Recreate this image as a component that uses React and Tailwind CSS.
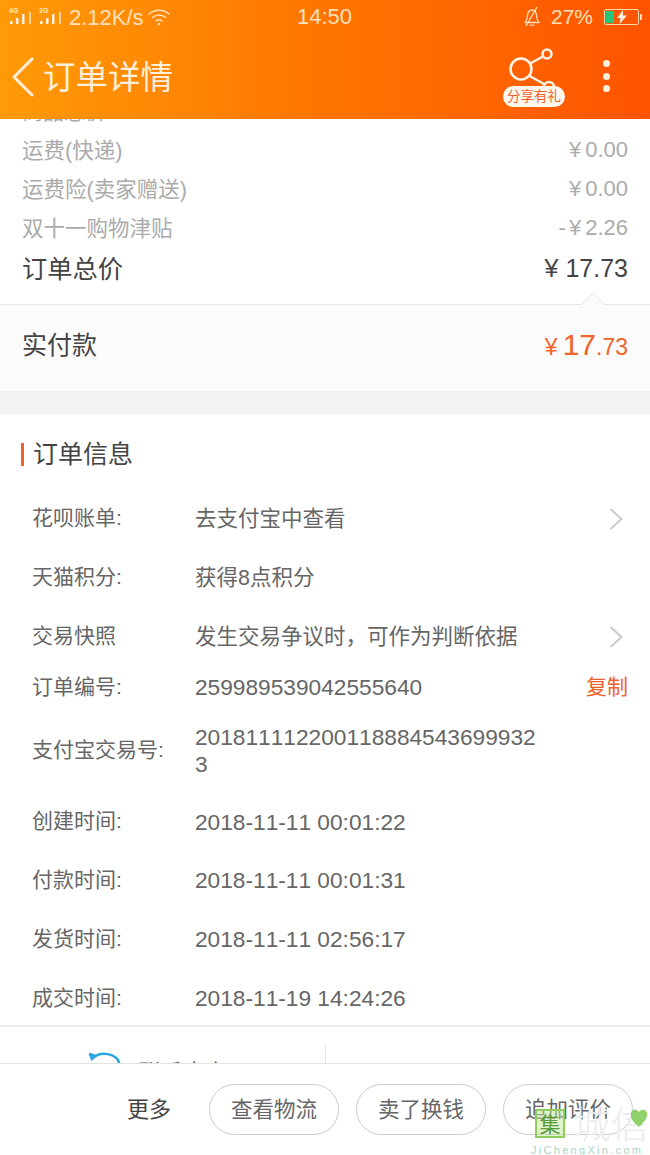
import React from 'react'

const cjk = "font-['Liberation_Sans','Noto_Sans_CJK_SC',sans-serif]"

const fees = [
  { label: '运费(快递)', sign: '', num: '0.00' },
  { label: '运费险(卖家赠送)', sign: '', num: '0.00' },
  { label: '双十一购物津贴', sign: '-', num: '2.26' },
]

const infoRows = [
  { label: '花呗账单:', value: '去支付宝中查看', h: 'h-[59px]', arrow: true },
  { label: '天猫积分:', value: '获得8点积分', h: 'h-[59px]' },
  { label: '交易快照', value: '发生交易争议时，可作为判断依据', h: 'h-[59px]', arrow: true },
  { label: '订单编号:', value: '259989539042555640', h: 'h-[43px]', copy: true, digits: true },
  { label: '支付宝交易号:', value: '201811112200118884543699932\n3', h: 'h-[84px]', digits: true },
  { label: '创建时间:', value: '2018-11-11 00:01:22', h: 'h-[58px]', digits: true },
  { label: '付款时间:', value: '2018-11-11 00:01:31', h: 'h-[59px]', digits: true },
  { label: '发货时间:', value: '2018-11-11 02:56:17', h: 'h-[59px]', digits: true },
  { label: '成交时间:', value: '2018-11-19 14:24:26', h: 'h-[59px]', digits: true },
]

function Signal({ tag }) {
  return (
    <span className="relative w-[23px] h-[18px] inline-block">
      <span className="absolute left-0 -top-[1px] text-[7px] leading-[8px] font-bold text-[#ffe9cc]">{tag}</span>
      <svg className="absolute left-0 top-0" width="23" height="18" viewBox="0 0 23 18" fill="#fff0dc">
        <rect x="1" y="13" width="2.500" height="3" />
        <rect x="7" y="10" width="2.500" height="6" />
        <rect x="13" y="6" width="2.500" height="10" />
        <rect x="20" y="4" width="2" height="12" opacity="0.7" />
      </svg>
    </span>
  )
}

function StatusBar() {
  return (
    <div className="h-[34px] relative flex items-center justify-between pl-[9px] pr-[11px] text-[22px] text-[#ffe0bd]">
      <div className="flex items-center">
        <div className="flex items-center gap-[7px]">
          <Signal tag="4G" />
          <Signal tag="2G" />
        </div>
        <span className="ml-[7px]">2.12K/s</span>
        <svg className="ml-[3px]" width="24" height="20" viewBox="0 0 24 20" fill="none" stroke="#ffe0bd" strokeWidth="1.6" strokeLinecap="round">
          <path d="M2 7c5.500-5 14.500-5 20 0" />
          <path d="M5.500 10.500c3.700-3.300 9.300-3.300 13 0" />
          <path d="M9 14c1.800-1.500 4.200-1.500 6 0" />
          <circle cx="12" cy="17" r="1.200" fill="#ffe0bd" stroke="none" />
        </svg>
      </div>
      <span className="absolute left-[297px] top-0 leading-[34px]">14:50</span>
      <div className="flex items-center">
        <svg width="20" height="22" viewBox="0 0 20 22" fill="none" stroke="#ffe0bd" strokeWidth="1.3" strokeLinejoin="round">
          <path d="M3 16.500c1.500-1.500 2-3 2.300-6C5.600 6.500 7.500 4 10 4s4.400 2.500 4.700 6.500c.3 3 .8 4.500 2.300 6z" />
          <path d="M8 18.500c.5 1.300 3.500 1.300 4 0" />
          <path d="M15 1 4 20" />
        </svg>
        <span className="ml-[9px] text-[21px]">27%</span>
        <span className="ml-[11px] relative w-[35px] h-[16px] border border-[#ffd9ac] rounded-[2px] flex items-center">
          <span className="w-[8px] h-[12px] ml-[1px] bg-[#27c77b]" />
          <svg className="ml-[3px]" width="10" height="14" viewBox="0 0 10 14" fill="#fff2df">
            <path d="M6 0 0 8h3.500L2.500 14 10 5.500H6z" />
          </svg>
          <span className="absolute -right-[4px] top-[4px] w-[2px] h-[6px] bg-[#ffd9ac]" />
        </span>
      </div>
    </div>
  )
}

function Header() {
  return (
    <header className="h-[119px] shrink-0 relative z-10 bg-gradient-to-r from-[#ff9a08] via-[#ff7400] to-[#ff5300]">
      <StatusBar />
      <div className="h-[85px] flex items-center pl-[11px] pr-[40px] pt-[1px]">
        <svg width="24" height="40" viewBox="0 0 24 40" fill="none" stroke="#ffeeda" strokeWidth="3" strokeLinecap="round" strokeLinejoin="round">
          <path d="M21 2 3 20l18 18" />
        </svg>
        <h1 className="ml-[8px] mt-[2px] text-[32.500px] leading-[40px] text-[#fff0dd]">订单详情</h1>
        <div className="ml-auto flex items-center gap-[38px]">
          <div className="relative w-[62px] h-[70px]">
            <svg className="absolute left-[4px] top-[6px]" width="54" height="46" viewBox="0 0 54 46" fill="none" stroke="#fff4e6" strokeWidth="2.500">
              <circle cx="14" cy="21" r="10.500" />
              <circle cx="40" cy="6" r="4.500" />
              <circle cx="42" cy="39" r="5" />
              <path d="M23 15.500 36 8.500M22.500 28 37 36" />
            </svg>
            <span className="absolute left-0 top-[44px] w-[62px] h-[21px] rounded-full bg-[#fff7ee] text-[#f0602a] text-[13.500px] leading-[21px] text-center whitespace-nowrap">分享有礼</span>
          </div>
          <div className="flex flex-col gap-[5.500px] pb-[2px]">
            <span className="w-[7px] h-[7px] rounded-full bg-[#fff0dd]" />
            <span className="w-[7px] h-[7px] rounded-full bg-[#fff0dd]" />
            <span className="w-[7px] h-[7px] rounded-full bg-[#fff0dd]" />
          </div>
        </div>
      </div>
    </header>
  )
}

function PriceSummary() {
  return (
    <section>
      <div className="-mt-[21px] px-[22px] h-[33px] text-[21px] leading-[27px] text-[#a8a8a8]">商品总价</div>
      <div className="px-[22px]">
        {fees.map(f => (
          <div key={f.label} className="h-[39px] flex items-center justify-between text-[#ababab]">
            <span className="text-[21.500px] mt-[1px]">{f.label}</span>
            <span className="text-[22px] flex items-center mb-[2px]">
              {f.sign && <span className="mr-[3px]">{f.sign}</span>}
              <span className="mr-[4px]">¥</span>{f.num}
            </span>
          </div>
        ))}
        <div className="h-[41px] pt-[2px] flex items-center justify-between text-[#444]">
          <span className="text-[25.250px]">订单总价</span>
          <span className="text-[25px] flex items-center mb-[2px]">
            <span className="mr-[7px]">¥</span>17.73
          </span>
        </div>
      </div>
      <div className="h-[15px]" />
      <div className="relative h-[87px] bg-[#fbfbfb] border-t border-[#e6e6e6] px-[22px] flex items-center justify-between pb-[4px]">
        <svg className="absolute right-[45px] -top-[13px]" width="24" height="13" viewBox="0 0 24 13" fill="#fbfbfb" stroke="#e6e6e6">
          <path d="M0 13 12 1l12 12" />
        </svg>
        <span className="text-[25px] text-[#444]">实付款</span>
        <span className="text-[#f0642a] flex items-baseline mb-[3px]">
          <span className="text-[23px]">¥</span>
          <span className="text-[30px] ml-[5px]">17</span>
          <span className="text-[23px]">.73</span>
        </span>
      </div>
      <div className="h-[23px] bg-[#f2f2f2]" />
    </section>
  )
}

function OrderInfo() {
  return (
    <section>
      <div className="h-[75px] pl-[21px] flex items-center pt-[5px]">
        <span className="w-[3px] h-[23px] bg-[#f0602a]" />
        <h2 className="ml-[9px] text-[25px] pt-[1px] text-[#444]">订单信息</h2>
      </div>
      <div>
        {infoRows.map(r => (
          <div key={r.label} className={`${r.h} flex items-center pl-[32px] pr-[22px] text-[#666]`}>
            <span className="w-[163px] shrink-0 text-[21px] -mt-[2px]">{r.label}</span>
            <span className={`${r.digits ? 'text-[22.700px] [font-kerning:none]' : 'text-[21.500px] mt-[2px]'} leading-[27px] whitespace-pre-line`}>{r.value}</span>
            {r.arrow && (
              <svg className="ml-auto mr-[5px]" width="14" height="24" viewBox="0 0 14 24" fill="none" stroke="#c8c8c8" strokeWidth="1.800">
                <path d="m1.500 2 11 10-11 10" />
              </svg>
            )}
            {r.copy && <span className="ml-auto text-[21px] -mt-[2px] text-[#f0602a]">复制</span>}
          </div>
        ))}
      </div>
    </section>
  )
}

function Contact() {
  return (
    <section className="border-t-2 border-[#eeeeee] flex -mt-[3px]">
      <div className="w-[325px] h-[60px] pt-[25px] pl-[88px] flex items-start">
        <svg width="34" height="30" viewBox="0 0 34 30" fill="none" stroke="#2aa7e2" strokeWidth="2.500">
          <path d="M2 2c1 2 1 3 2 5C10 0 24 0 30 8c3 5 2 12-2 16" />
          <path d="M1 2 8 4" />
        </svg>
        <span className="ml-[17px] -mt-[1px] pt-[5px] text-[22px] text-[#666]">联系卖家</span>
      </div>
      <div className="w-px h-[45px] mt-[17px] bg-[#e5e5e5]" />
    </section>
  )
}

function Footer() {
  return (
    <footer className="absolute left-0 right-0 bottom-0 h-[92px] bg-white border-t border-[#e4e4e4] z-10 flex items-start pt-[20px] pl-[127px] text-[22px]">
      <span className="w-[82px] leading-[52px] text-[#444]">更多</span>
      <div className="flex gap-[17px]">
        {['查看物流', '卖了换钱', '追加评价'].map(t => (
          <button key={t} className="w-[130px] h-[51px] pt-[2px] rounded-full border border-[#cccccc] text-[#666] text-[21.500px] bg-white">{t}</button>
        ))}
      </div>
    </footer>
  )
}

function Watermark() {
  return (
    <div className="absolute left-[530px] top-[1104px] w-[120px] h-[51px] z-20">
      <div className="absolute left-[5px] top-[5px] w-[30px] h-[29px] border-2 border-[#8fce5c] bg-[#bfe89a]/50 text-[#5a9a3a] text-[21px] leading-[24px] text-center font-['Noto_Sans_CJK_SC',sans-serif]">集</div>
      <div className="absolute left-[43px] -top-[3px] text-[38px] leading-[42px] text-[#ececec] whitespace-nowrap font-['Noto_Sans_CJK_SC',sans-serif] font-light">城信</div>
      <svg className="absolute left-[98px] top-[3px]" width="22" height="22" viewBox="0 0 22 22">
        <path d="M11 20C5 15 2 11 3 6c1-4 6-4 8-1 2-3 7-3 8 1 1 5-3 9-8 14z" fill="#8fd16a" />
      </svg>
      <div className="absolute left-[1px] top-[39px] text-[11px] tracking-[2.300px] leading-[14px] text-[#a9d6bf] whitespace-nowrap">JiChengXin.com</div>
    </div>
  )
}

export default function App() {
  return (
    <div className={`relative w-[650px] h-[1155px] overflow-hidden bg-white flex flex-col ${cjk}`}>
      <Header />
      <main className="flex-1 overflow-hidden">
        <PriceSummary />
        <OrderInfo />
        <Contact />
      </main>
      <Footer />
      <Watermark />
    </div>
  )
}
